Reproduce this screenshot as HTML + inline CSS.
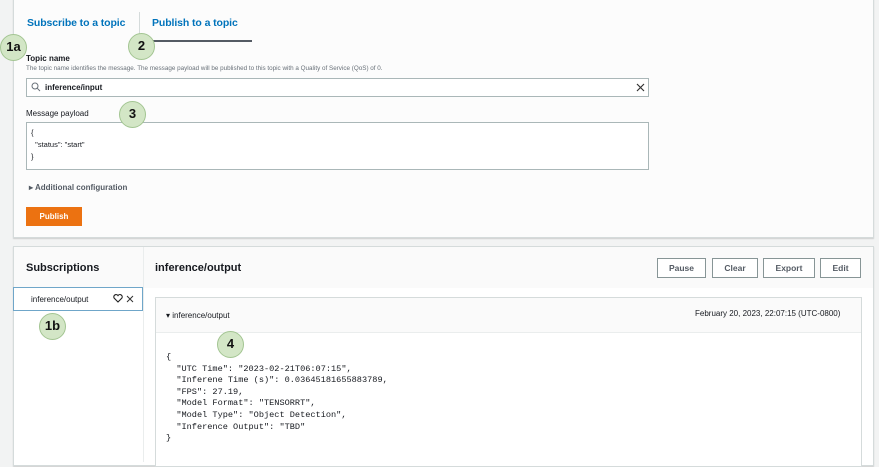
<!DOCTYPE html>
<html><head><style>
*{box-sizing:border-box;margin:0;padding:0}
body{width:879px;height:462px;overflow:hidden;background:#f2f3f3;font-family:"Liberation Sans",sans-serif;color:#16191f;position:relative}
.a{position:absolute}
.panel{background:#fff;border:1px solid #d5dbdb;box-shadow:0 1px 1px rgba(0,0,0,.15)}
.btn{position:absolute;top:258px;height:20px;border:1px solid #879596;background:#fff;font-size:8.5px;font-weight:bold;color:#545b64;text-align:center;line-height:18px}
.c{position:absolute;width:27px;height:27px;border-radius:50%;background:#d3e6c6;border:1.5px solid #a3c592;font-weight:bold;font-size:13px;text-align:center;line-height:24px;color:#111}
.mono{font-family:"Liberation Mono",monospace;font-size:8.6px;line-height:11.6px;color:#16191f;white-space:pre}
</style></head><body>
<div class="a panel" style="left:13px;top:-2px;width:861px;height:240px;background:#fcfcfc"></div>
<div class="a" style="left:27px;top:17px;font-size:10.5px;font-weight:bold;color:#0073bb;letter-spacing:-0.1px">Subscribe to a topic</div>
<div class="a" style="left:139px;top:12px;width:1px;height:29px;background:#d5dbdb"></div>
<div class="a" style="left:152px;top:17px;font-size:10.5px;font-weight:bold;color:#0073bb;letter-spacing:-0.1px">Publish to a topic</div>
<div class="a" style="left:139px;top:40px;width:113px;height:2px;background:#545b64"></div>
<div class="a" style="left:26px;top:54px;font-size:8px;font-weight:bold">Topic name</div>
<div class="a" style="left:26px;top:65px;font-size:6.3px;color:#687078">The topic name identifies the message. The message payload will be published to this topic with a Quality of Service (QoS) of 0.</div>
<div class="a" style="left:26px;top:78px;width:623px;height:19px;border:1px solid #aab7b8;background:#fff"></div>
<svg class="a" style="left:31px;top:82px" width="10" height="10" viewBox="0 0 10 10"><circle cx="4" cy="4" r="3" fill="none" stroke="#687078" stroke-width="1"/><path d="M6.3 6.3L9 9" stroke="#687078" stroke-width="1"/></svg>
<div class="a" style="left:45px;top:83px;font-size:8px;font-weight:bold">inference/input</div>
<svg class="a" style="left:636px;top:83px" width="9" height="9"><path d="M1 1L8 8M8 1L1 8" stroke="#333" stroke-width="1.2"/></svg>
<div class="a" style="left:26px;top:109px;font-size:8px">Message payload</div>
<div class="a" style="left:26px;top:122px;width:623px;height:48px;border:1px solid #aab7b8;background:#fff"></div>
<div class="a" style="left:31px;top:127px;font-size:7.5px;line-height:12px">{<br>&nbsp;&nbsp;"status": "start"<br>}</div>
<div class="a" style="left:29px;top:183px;font-size:8px;font-weight:bold;color:#545b64">▸ Additional configuration</div>
<div class="a" style="left:26px;top:207px;width:56px;height:19px;background:#ec7211;color:#fff;font-size:8px;font-weight:bold;text-align:center;line-height:19px">Publish</div>

<div class="a panel" style="left:13px;top:246px;width:861px;height:220px"></div>
<div class="a" style="left:14px;top:247px;width:859px;height:41px;background:#fafafa"></div>
<div class="a" style="left:143px;top:247px;width:1px;height:215px;background:#eaeded"></div>
<div class="a" style="left:26px;top:262px;font-size:11px;font-weight:bold">Subscriptions</div>
<div class="a" style="left:155px;top:262px;font-size:11px;font-weight:bold">inference/output</div>
<div class="a" style="left:13px;top:287px;width:130px;height:24px;border:1px solid #6fa6c9;background:#fff"></div>
<div class="a" style="left:31px;top:295px;font-size:8px">inference/output</div>
<svg class="a" style="left:113px;top:294px" width="10" height="9" viewBox="0 0 10 9"><path d="M5 8L1.2 4.2A2.2 2.2 0 0 1 5 1.6A2.2 2.2 0 0 1 8.8 4.2Z" fill="none" stroke="#222" stroke-width="1.1"/></svg>
<svg class="a" style="left:126px;top:295px" width="8" height="8"><path d="M1 1L7 7M7 1L1 7" stroke="#333" stroke-width="1"/></svg>
<div class="btn" style="left:657px;width:49px">Pause</div>
<div class="btn" style="left:712px;width:46px">Clear</div>
<div class="btn" style="left:763px;width:52px">Export</div>
<div class="btn" style="left:820px;width:41px">Edit</div>
<div class="a" style="left:155px;top:297px;width:707px;height:170px;border:1px solid #d5dbdb;background:#fff"></div>
<div class="a" style="left:156px;top:298px;width:705px;height:35px;background:#fafafa;border-bottom:1px solid #eaeded"></div>
<div class="a" style="left:166px;top:311px;font-size:8px">▾ inference/output</div>
<div class="a" style="left:695px;top:309px;font-size:8px">February 20, 2023, 22:07:15 (UTC-0800)</div>
<div class="a mono" style="left:166px;top:352px">{
  "UTC Time": "2023-02-21T06:07:15",
  "Inferene Time (s)": 0.03645181655883789,
  "FPS": 27.19,
  "Model Format": "TENSORRT",
  "Model Type": "Object Detection",
  "Inference Output": "TBD"
}</div>

<div class="c" style="left:0px;top:34px">1a</div>
<div class="c" style="left:128px;top:33px">2</div>
<div class="c" style="left:119px;top:101px">3</div>
<div class="c" style="left:39px;top:313px">1b</div>
<div class="c" style="left:217px;top:331px">4</div>
</body></html>
